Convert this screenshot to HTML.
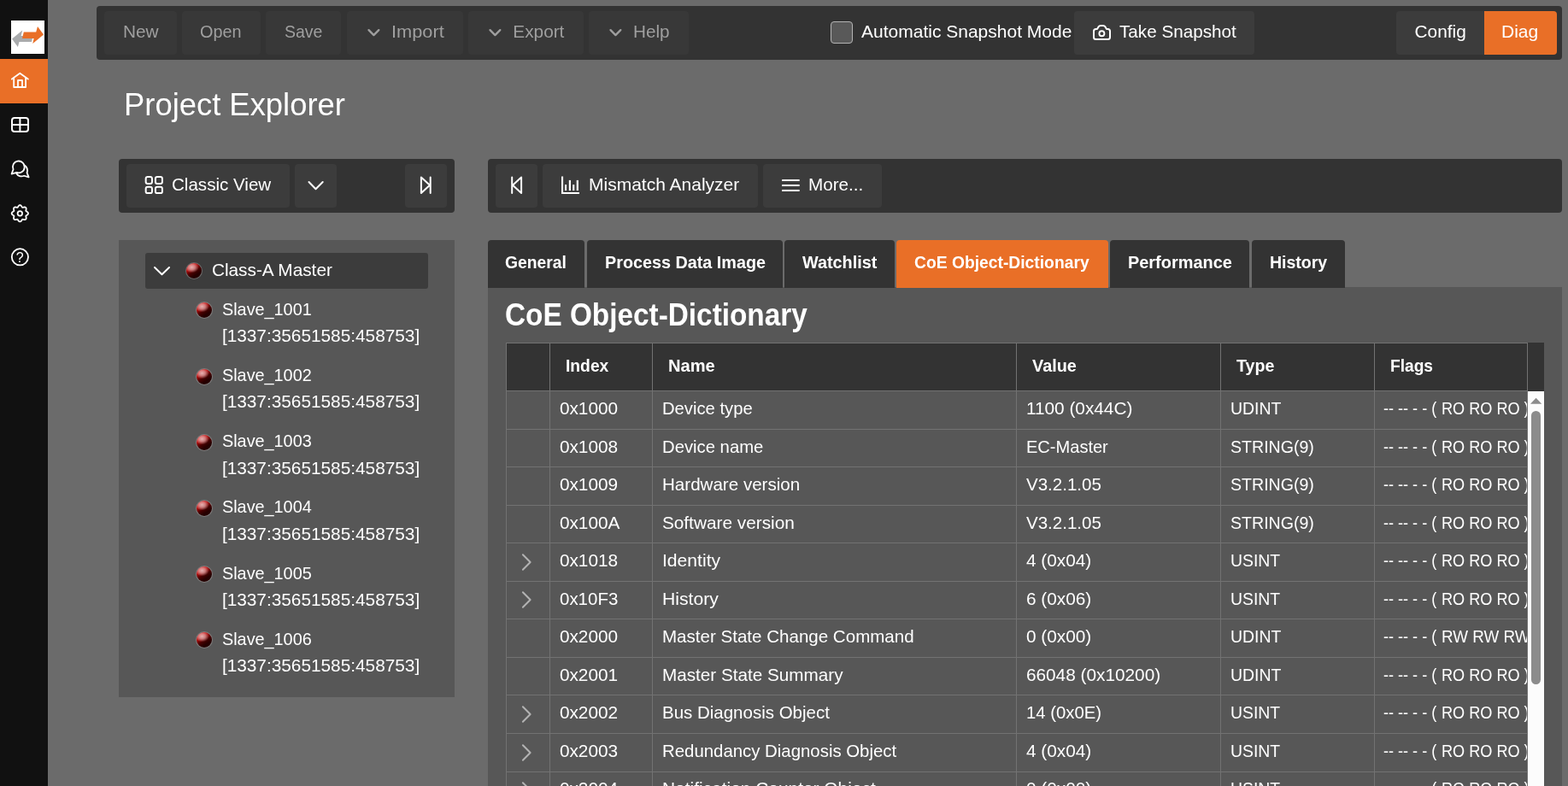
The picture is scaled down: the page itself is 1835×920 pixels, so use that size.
<!DOCTYPE html>
<html lang="en">
<head>
<meta charset="utf-8">
<title>Project Explorer</title>
<style>
*{box-sizing:border-box;margin:0;padding:0}
html,body{width:1835px;height:920px;overflow:hidden;background:#6b6b6b}
body{font-family:"Liberation Sans",sans-serif;font-size:20.8px;line-height:20.8px;color:#fff;position:relative}
body div,body span,body svg{position:absolute}
svg{overflow:visible}
#app{left:0;top:0;width:1835px;height:920px;will-change:transform}
.t{white-space:nowrap;transform-origin:0 50%;display:block}
.b{font-weight:bold}
.clip{overflow:hidden}
.ball{width:20px;height:20px;border-radius:50%;border:1px solid rgba(205,200,200,.32);background-clip:padding-box;
background:radial-gradient(ellipse 46% 36% at 36% 27%,rgba(232,195,195,.9) 0%,rgba(226,170,170,.72) 45%,rgba(210,90,90,0) 100%) padding-box,linear-gradient(148deg,#e81c1c 8%,#c00a0a 30%,#480000 53%,#240000 72%,#280000 100%) padding-box}
</style>
</head>
<body>
<div id="app">
<div style="left:0px;top:0px;width:56px;height:920px;background:#111;"></div>
<div style="left:13px;top:24px;width:39px;height:39px;background:#fff;"></div>
<svg style="left:13px;top:24px" width="39" height="39" viewBox="13 24 39 39" ><g transform="translate(13 24)"><polygon fill="#a9abad" points="1,21.5 13.2,11.5 11.6,18 25.6,18 24,24.9 9.5,24.9 7.9,31.1"/><polygon fill="#e96f27" points="14.8,13.5 29.2,13.5 31,7 38,16.6 25.3,27 26.6,21 13,21"/></g></svg>
<div style="left:0px;top:69px;width:56px;height:52px;background:#e96f27;"></div>
<svg style="left:8px;top:80px" width="32" height="28" viewBox="8 80 32 28" ><g fill="none" stroke="#fff" stroke-width="1.8" stroke-linecap="round" stroke-linejoin="round"><path d="M13.9 92.6 L23.3 85.7 L32.8 92.6"/><path d="M16.2 91.6 V102 H30.1 V91.6"/><path d="M21 102 V94 H26 V102"/></g></svg>
<svg style="left:8px;top:132px" width="32" height="28" viewBox="8 132 32 28" ><g fill="none" stroke="#fff" stroke-width="2" stroke-linecap="round" stroke-linejoin="round"><rect x="14" y="138" width="19" height="16" rx="3"/><path d="M23.4 138 V154 M14 146 H33"/></g></svg>
<svg style="left:8px;top:184px" width="32" height="30" viewBox="8 184 32 30" ><g fill="none" stroke="#fff" stroke-width="1.8" stroke-linecap="round" stroke-linejoin="round"><path d="M13.6 203.6 L15.55 198.3 A6.9 6.9 0 1 1 19.44 201.9 Z"/><path d="M28.4 193.4 A6.9 6.9 0 0 1 31.55 202.1 L33.6 207.4 L28.07 205.75 A6.9 6.9 0 0 1 19.17 202.95"/></g></svg>
<svg style="left:8px;top:236px" width="32" height="28" viewBox="8 236 32 28" ><g fill="none" stroke="#fff" stroke-width="1.8" stroke-linecap="round" stroke-linejoin="round"><path d="M23.35 240.15 L23.73 240.20 L24.09 240.34 L24.44 240.57 L24.77 240.87 L25.06 241.21 L25.32 241.59 L25.56 241.96 L25.78 242.31 L26.00 242.62 L26.24 242.82 L26.56 242.85 L26.92 242.79 L27.33 242.69 L27.76 242.60 L28.21 242.52 L28.67 242.48 L29.11 242.50 L29.51 242.59 L29.87 242.74 L30.17 242.98 L30.41 243.28 L30.56 243.64 L30.65 244.04 L30.67 244.48 L30.63 244.94 L30.55 245.39 L30.46 245.82 L30.36 246.23 L30.30 246.59 L30.33 246.91 L30.53 247.15 L30.84 247.37 L31.19 247.59 L31.56 247.83 L31.94 248.09 L32.28 248.38 L32.58 248.71 L32.81 249.06 L32.95 249.42 L33.00 249.80 L32.95 250.18 L32.81 250.54 L32.58 250.89 L32.28 251.22 L31.94 251.51 L31.56 251.77 L31.19 252.01 L30.84 252.23 L30.53 252.45 L30.33 252.69 L30.30 253.01 L30.36 253.37 L30.46 253.78 L30.55 254.21 L30.63 254.66 L30.67 255.12 L30.65 255.56 L30.56 255.96 L30.41 256.32 L30.17 256.62 L29.87 256.86 L29.51 257.01 L29.11 257.10 L28.67 257.12 L28.21 257.08 L27.76 257.00 L27.33 256.91 L26.92 256.81 L26.56 256.75 L26.24 256.78 L26.00 256.98 L25.78 257.29 L25.56 257.64 L25.32 258.01 L25.06 258.39 L24.77 258.73 L24.44 259.03 L24.09 259.26 L23.73 259.40 L23.35 259.45 L22.97 259.40 L22.61 259.26 L22.26 259.03 L21.93 258.73 L21.64 258.39 L21.38 258.01 L21.14 257.64 L20.92 257.29 L20.70 256.98 L20.46 256.78 L20.14 256.75 L19.78 256.81 L19.37 256.91 L18.94 257.00 L18.49 257.08 L18.03 257.12 L17.59 257.10 L17.19 257.01 L16.83 256.86 L16.53 256.62 L16.29 256.32 L16.14 255.96 L16.05 255.56 L16.03 255.12 L16.07 254.66 L16.15 254.21 L16.24 253.78 L16.34 253.37 L16.40 253.01 L16.37 252.69 L16.17 252.45 L15.86 252.23 L15.51 252.01 L15.14 251.77 L14.76 251.51 L14.42 251.22 L14.12 250.89 L13.89 250.54 L13.75 250.18 L13.70 249.80 L13.75 249.42 L13.89 249.06 L14.12 248.71 L14.42 248.38 L14.76 248.09 L15.14 247.83 L15.51 247.59 L15.86 247.37 L16.17 247.15 L16.37 246.91 L16.40 246.59 L16.34 246.23 L16.24 245.82 L16.15 245.39 L16.07 244.94 L16.03 244.48 L16.05 244.04 L16.14 243.64 L16.29 243.28 L16.53 242.98 L16.83 242.74 L17.19 242.59 L17.59 242.50 L18.03 242.48 L18.49 242.52 L18.94 242.60 L19.37 242.69 L19.78 242.79 L20.14 242.85 L20.46 242.82 L20.70 242.62 L20.92 242.31 L21.14 241.96 L21.38 241.59 L21.64 241.21 L21.93 240.87 L22.26 240.57 L22.61 240.34 L22.97 240.20 Z"/><circle cx="23.35" cy="249.8" r="2.75"/></g></svg>
<svg style="left:8px;top:287px" width="32" height="28" viewBox="8 287 32 28" ><g fill="none" stroke="#fff" stroke-width="1.8" stroke-linecap="round" stroke-linejoin="round"><circle cx="23.4" cy="300.8" r="9.6"/></g><text x="23.3" y="306.8" text-anchor="middle" font-family="Liberation Sans, sans-serif" font-size="16" fill="#fff">?</text></svg>
<div style="left:113px;top:7px;width:1715px;height:62.6px;background:#333;border-radius:4px"></div>
<div style="left:122px;top:13px;width:85px;height:50.9px;background:#383838;border-radius:4px;"></div>
<span class="t" style="left:144.0px;top:27px;color:#9f9f9f;">New</span>
<div style="left:213px;top:13px;width:92px;height:50.9px;background:#383838;border-radius:4px;"></div>
<span class="t" style="left:234.4px;top:27px;transform:scaleX(0.953);color:#9f9f9f;">Open</span>
<div style="left:311px;top:13px;width:88px;height:50.9px;background:#383838;border-radius:4px;"></div>
<span class="t" style="left:332.6px;top:27px;transform:scaleX(0.938);color:#9f9f9f;">Save</span>
<div style="left:406px;top:13px;width:136px;height:50.9px;background:#383838;border-radius:4px;"></div>
<svg style="left:426px;top:28px" width="24" height="20" viewBox="426 28 24 20" ><path fill="none" stroke="#9f9f9f" stroke-width="2.3" stroke-linecap="round" stroke-linejoin="round" d="M431.5 35.1 L437.4 41.1 L443.3 35.1"/></svg>
<span class="t" style="left:458.3px;top:27px;transform:scaleX(1.048);color:#9f9f9f;">Import</span>
<div style="left:548px;top:13px;width:135px;height:50.9px;background:#383838;border-radius:4px;"></div>
<svg style="left:568px;top:28px" width="24" height="20" viewBox="568 28 24 20" ><path fill="none" stroke="#9f9f9f" stroke-width="2.3" stroke-linecap="round" stroke-linejoin="round" d="M573.5 35.1 L579.4 41.1 L585.3 35.1"/></svg>
<span class="t" style="left:600.3px;top:27px;color:#9f9f9f;">Export</span>
<div style="left:689px;top:13px;width:117px;height:50.9px;background:#383838;border-radius:4px;"></div>
<svg style="left:709px;top:28px" width="24" height="20" viewBox="709 28 24 20" ><path fill="none" stroke="#9f9f9f" stroke-width="2.3" stroke-linecap="round" stroke-linejoin="round" d="M714.5 35.1 L720.4 41.1 L726.3 35.1"/></svg>
<span class="t" style="left:741.3px;top:27px;transform:scaleX(0.996);color:#9f9f9f;">Help</span>
<div style="left:972px;top:25px;width:26px;height:26px;background:#595959;border:1.3px solid #b4b4b4;border-radius:4px"></div>
<span class="t" style="left:1008.2px;top:27px;transform:scaleX(1.010);">Automatic Snapshot Mode</span>
<div style="left:1257px;top:13px;width:211px;height:50.9px;background:#3c3c3c;border-radius:4px;"></div>
<svg style="left:1276px;top:26px" width="28" height="24" viewBox="1276 26 28 24" ><g fill="none" stroke="#fff" stroke-width="2" stroke-linejoin="round"><path d="M1282.5 34 H1284 L1285.8 31 Q1286.5 29.9 1288 29.9 H1291 Q1292.5 29.9 1293.2 31 L1295 34 H1296.5 Q1299 34 1299 36.5 V43.4 Q1299 45.9 1296.5 45.9 H1282.5 Q1280 45.9 1280 43.4 V36.5 Q1280 34 1282.5 34 Z"/><circle cx="1289.4" cy="39.3" r="3.0" stroke-width="1.9"/></g></svg>
<span class="t" style="left:1310.2px;top:27px;transform:scaleX(0.994);">Take Snapshot</span>
<div style="left:1634px;top:13px;width:103px;height:50.9px;background:#3c3c3c;border-radius:4px;border-radius:4px 0 0 4px"></div>
<span class="t" style="left:1655.6px;top:27px;">Config</span>
<div style="left:1737px;top:13px;width:85px;height:50.9px;background:#e96f27;border-radius:4px;border-radius:0 4px 4px 0"></div>
<span class="t" style="left:1757.4px;top:27px;transform:scaleX(1.009);">Diag</span>
<span class="t raw" style="left:145.0px;top:105px;font-size:36.4px;line-height:36.4px;">Project Explorer</span>
<div style="left:139px;top:186px;width:393px;height:62.6px;background:#333;border-radius:4px"></div>
<div style="left:148px;top:192px;width:191.3px;height:50.7px;background:#3c3c3c;border-radius:4px"></div>
<svg style="left:168px;top:204px" width="25" height="25" viewBox="168 204 25 25" ><g fill="none" stroke="#fff" stroke-width="2"><rect x="170.65" y="206.9" width="7.3" height="8.0" rx="2.2"/><rect x="170.65" y="218.8" width="7.3" height="7.3" rx="2.2"/><rect x="181.9" y="206.9" width="8.0" height="8.0" rx="2.2"/><rect x="181.9" y="218.8" width="8.0" height="7.3" rx="2.2"/></g></svg>
<span class="t" style="left:201.0px;top:206px;transform:scaleX(0.989);">Classic View</span>
<div style="left:345px;top:192px;width:48.69999999999999px;height:50.7px;background:#3c3c3c;border-radius:4px"></div>
<svg style="left:358px;top:208px" width="24" height="18" viewBox="358 208 24 18" ><path fill="none" stroke="#fff" stroke-width="2" stroke-linecap="round" stroke-linejoin="round" d="M361.5 213 L369.5 221.2 L377.7 213"/></svg>
<div style="left:474px;top:192px;width:48.799999999999955px;height:50.7px;background:#3c3c3c;border-radius:4px"></div>
<svg style="left:489px;top:204px" width="20" height="26" viewBox="489 204 20 26" ><path fill="none" stroke="#fff" stroke-width="2" stroke-linecap="round" stroke-linejoin="round" d="M492.9 207.5 V226 L503 216.7 Z M503.7 207.5 V226"/></svg>
<div style="left:571px;top:186px;width:1257px;height:62.6px;background:#333;border-radius:4px"></div>
<div style="left:580px;top:192px;width:49.200000000000045px;height:50.7px;background:#3c3c3c;border-radius:4px"></div>
<svg style="left:595px;top:204px" width="20" height="26" viewBox="595 204 20 26" ><path fill="none" stroke="#fff" stroke-width="2" stroke-linecap="round" stroke-linejoin="round" d="M599.2 207.5 V226 M610.1 207.5 V226 L600 216.7 Z"/></svg>
<div style="left:635px;top:192px;width:252px;height:50.7px;background:#3c3c3c;border-radius:4px"></div>
<svg style="left:655px;top:204px" width="26" height="26" viewBox="655 204 26 26" ><g fill="#fff"><path d="M657 206.6 h2.1 v18.3 h18.9 v2.1 h-21 z"/><rect x="661" y="216.1" width="2.1" height="7"/><rect x="665.8" y="210.9" width="2.2" height="12.2"/><rect x="670.2" y="216.1" width="2.1" height="7"/><rect x="674.7" y="210.9" width="2.2" height="12.2"/></g></svg>
<span class="t" style="left:688.6px;top:206px;transform:scaleX(1.010);">Mismatch Analyzer</span>
<div style="left:893px;top:192px;width:139px;height:50.7px;background:#3c3c3c;border-radius:4px"></div>
<svg style="left:913px;top:208px" width="25" height="18" viewBox="913 208 25 18" ><g fill="#fff"><rect x="915" y="210" width="20.7" height="2" rx=".6"/><rect x="915" y="216" width="20.7" height="2" rx=".6"/><rect x="915" y="222" width="20.7" height="2" rx=".6"/></g></svg>
<span class="t" style="left:946.2px;top:206px;transform:scaleX(0.994);">More...</span>
<div style="left:139px;top:281px;width:393px;height:534.5px;background:#575757;"></div>
<div style="left:170px;top:296px;width:331px;height:41.8px;background:#3c3c3c;border-radius:3px"></div>
<svg style="left:178px;top:308px" width="24" height="18" viewBox="178 308 24 18" ><path fill="none" stroke="#fff" stroke-width="2" stroke-linecap="round" stroke-linejoin="round" d="M181 313 L189.5 321.3 L198 313"/></svg>
<div class="ball" style="left:217.2px;top:307.3px"></div>
<span class="t" style="left:247.9px;top:306px;">Class-A Master</span>
<div class="ball" style="left:229.3px;top:353.29999999999995px"></div>
<span class="t" style="left:259.6px;top:352px;transform:scaleX(0.953);">Slave_1001</span>
<span class="t" style="left:259.9px;top:383px;">[1337:35651585:458753]</span>
<div class="ball" style="left:229.3px;top:430.49999999999994px"></div>
<span class="t" style="left:259.6px;top:429px;transform:scaleX(0.953);">Slave_1002</span>
<span class="t" style="left:259.9px;top:460px;">[1337:35651585:458753]</span>
<div class="ball" style="left:229.3px;top:507.69999999999993px"></div>
<span class="t" style="left:259.6px;top:506px;transform:scaleX(0.953);">Slave_1003</span>
<span class="t" style="left:259.9px;top:538px;">[1337:35651585:458753]</span>
<div class="ball" style="left:229.3px;top:584.9px"></div>
<span class="t" style="left:259.6px;top:583px;transform:scaleX(0.953);">Slave_1004</span>
<span class="t" style="left:259.9px;top:615px;">[1337:35651585:458753]</span>
<div class="ball" style="left:229.3px;top:662.1px"></div>
<span class="t" style="left:259.6px;top:661px;transform:scaleX(0.953);">Slave_1005</span>
<span class="t" style="left:259.9px;top:692px;">[1337:35651585:458753]</span>
<div class="ball" style="left:229.3px;top:739.3px"></div>
<span class="t" style="left:259.6px;top:738px;transform:scaleX(0.953);">Slave_1006</span>
<span class="t" style="left:259.9px;top:769px;">[1337:35651585:458753]</span>
<div style="left:571px;top:336px;width:1257px;height:584px;background:#575757;"></div>
<div style="left:571px;top:281px;width:112.6px;height:56px;background:#333;border-radius:4px 4px 0 0"></div>
<span class="t b" style="left:591.3px;top:297px;transform:scaleX(0.929);">General</span>
<div style="left:687px;top:281px;width:229px;height:56px;background:#333;border-radius:4px 4px 0 0"></div>
<span class="t b" style="left:707.5px;top:297px;transform:scaleX(0.951);">Process Data Image</span>
<div style="left:918.3px;top:281px;width:128.7px;height:56px;background:#333;border-radius:4px 4px 0 0"></div>
<span class="t b" style="left:939.3px;top:297px;transform:scaleX(0.952);">Watchlist</span>
<div style="left:1049px;top:281px;width:248px;height:56px;background:#e96f27;border-radius:4px 4px 0 0"></div>
<span class="t b" style="left:1069.8px;top:297px;transform:scaleX(0.927);">CoE Object-Dictionary</span>
<div style="left:1299px;top:281px;width:162.7px;height:56px;background:#333;border-radius:4px 4px 0 0"></div>
<span class="t b" style="left:1319.8px;top:297px;transform:scaleX(0.958);">Performance</span>
<div style="left:1465px;top:281px;width:108.8px;height:56px;background:#333;border-radius:4px 4px 0 0"></div>
<span class="t b" style="left:1485.8px;top:297px;transform:scaleX(0.938);">History</span>
<span class="t b" style="left:591.4px;top:351px;font-size:36.4px;line-height:36.4px;transform:scaleX(0.916);">CoE Object-Dictionary</span>
<div style="left:592px;top:401px;width:1215px;height:57px;background:#333;"></div>
<span class="t b" style="left:662.4px;top:418px;transform:scaleX(0.926);">Index</span>
<span class="t b" style="left:782.4px;top:418px;transform:scaleX(0.967);">Name</span>
<span class="t b" style="left:1208.4px;top:418px;transform:scaleX(0.953);">Value</span>
<span class="t b" style="left:1447.4px;top:418px;transform:scaleX(0.944);">Type</span>
<span class="t b" style="left:1627.4px;top:418px;transform:scaleX(0.921);">Flags</span>
<div class="clip" style="left:592px;top:401px;width:1195.5px;height:519px">
<div style="left:-592px;top:-401px;width:0;height:0"><span class="t" style="left:654.9px;top:468px;">0x1000</span>
<span class="t" style="left:774.9px;top:468px;transform:scaleX(0.973);">Device type</span>
<span class="t" style="left:1200.9px;top:468px;">1100 (0x44C)</span>
<span class="t" style="left:1439.9px;top:468px;transform:scaleX(0.936);">UDINT</span>
<span class="t" style="left:1618.7px;top:468px;transform:scaleX(0.869);">-- -- - - (</span>
<span class="t" style="left:1687.3px;top:468px;transform:scaleX(0.871);">RO RO RO )</span>
<span class="t" style="left:654.9px;top:513px;">0x1008</span>
<span class="t" style="left:774.9px;top:513px;transform:scaleX(0.975);">Device name</span>
<span class="t" style="left:1200.9px;top:513px;transform:scaleX(0.964);">EC-Master</span>
<span class="t" style="left:1439.9px;top:513px;transform:scaleX(0.941);">STRING(9)</span>
<span class="t" style="left:1618.7px;top:513px;transform:scaleX(0.869);">-- -- - - (</span>
<span class="t" style="left:1687.3px;top:513px;transform:scaleX(0.871);">RO RO RO )</span>
<span class="t" style="left:654.9px;top:557px;">0x1009</span>
<span class="t" style="left:774.9px;top:557px;transform:scaleX(0.989);">Hardware version</span>
<span class="t" style="left:1200.9px;top:557px;transform:scaleX(0.986);">V3.2.1.05</span>
<span class="t" style="left:1439.9px;top:557px;transform:scaleX(0.941);">STRING(9)</span>
<span class="t" style="left:1618.7px;top:557px;transform:scaleX(0.869);">-- -- - - (</span>
<span class="t" style="left:1687.3px;top:557px;transform:scaleX(0.871);">RO RO RO )</span>
<span class="t" style="left:654.9px;top:602px;">0x100A</span>
<span class="t" style="left:774.9px;top:602px;">Software version</span>
<span class="t" style="left:1200.9px;top:602px;transform:scaleX(0.986);">V3.2.1.05</span>
<span class="t" style="left:1439.9px;top:602px;transform:scaleX(0.941);">STRING(9)</span>
<span class="t" style="left:1618.7px;top:602px;transform:scaleX(0.869);">-- -- - - (</span>
<span class="t" style="left:1687.3px;top:602px;transform:scaleX(0.871);">RO RO RO )</span>
<span class="t" style="left:654.9px;top:646px;">0x1018</span>
<span class="t" style="left:774.9px;top:646px;transform:scaleX(1.016);">Identity</span>
<span class="t" style="left:1200.9px;top:646px;">4 (0x04)</span>
<span class="t" style="left:1439.9px;top:646px;transform:scaleX(0.933);">USINT</span>
<span class="t" style="left:1618.7px;top:646px;transform:scaleX(0.869);">-- -- - - (</span>
<span class="t" style="left:1687.3px;top:646px;transform:scaleX(0.871);">RO RO RO )</span>
<svg style="left:607px;top:645.7px" width="20" height="24" viewBox="607 645.7 20 24" ><path fill="none" stroke="#b3b3b3" stroke-width="2" stroke-linecap="round" stroke-linejoin="round" d="M611.9 648.9 L620.6 657.7 L611.9 666.5"/></svg>
<span class="t" style="left:654.9px;top:691px;transform:scaleX(0.984);">0x10F3</span>
<span class="t" style="left:774.9px;top:691px;transform:scaleX(1.018);">History</span>
<span class="t" style="left:1200.9px;top:691px;">6 (0x06)</span>
<span class="t" style="left:1439.9px;top:691px;transform:scaleX(0.933);">USINT</span>
<span class="t" style="left:1618.7px;top:691px;transform:scaleX(0.869);">-- -- - - (</span>
<span class="t" style="left:1687.3px;top:691px;transform:scaleX(0.871);">RO RO RO )</span>
<svg style="left:607px;top:690.2px" width="20" height="24" viewBox="607 690.2 20 24" ><path fill="none" stroke="#b3b3b3" stroke-width="2" stroke-linecap="round" stroke-linejoin="round" d="M611.9 693.5 L620.6 702.2 L611.9 711.0"/></svg>
<span class="t" style="left:654.9px;top:735px;">0x2000</span>
<span class="t" style="left:774.9px;top:735px;transform:scaleX(0.988);">Master State Change Command</span>
<span class="t" style="left:1200.9px;top:735px;">0 (0x00)</span>
<span class="t" style="left:1439.9px;top:735px;transform:scaleX(0.936);">UDINT</span>
<span class="t" style="left:1618.7px;top:735px;transform:scaleX(0.869);">-- -- - - (</span>
<span class="t" style="left:1687.3px;top:735px;transform:scaleX(0.904);">RW RW RW )</span>
<span class="t" style="left:654.9px;top:780px;">0x2001</span>
<span class="t" style="left:774.9px;top:780px;transform:scaleX(0.995);">Master State Summary</span>
<span class="t" style="left:1200.9px;top:780px;">66048 (0x10200)</span>
<span class="t" style="left:1439.9px;top:780px;transform:scaleX(0.936);">UDINT</span>
<span class="t" style="left:1618.7px;top:780px;transform:scaleX(0.869);">-- -- - - (</span>
<span class="t" style="left:1687.3px;top:780px;transform:scaleX(0.871);">RO RO RO )</span>
<span class="t" style="left:654.9px;top:824px;">0x2002</span>
<span class="t" style="left:774.9px;top:824px;transform:scaleX(0.985);">Bus Diagnosis Object</span>
<span class="t" style="left:1200.9px;top:824px;transform:scaleX(0.977);">14 (0x0E)</span>
<span class="t" style="left:1439.9px;top:824px;transform:scaleX(0.933);">USINT</span>
<span class="t" style="left:1618.7px;top:824px;transform:scaleX(0.869);">-- -- - - (</span>
<span class="t" style="left:1687.3px;top:824px;transform:scaleX(0.871);">RO RO RO )</span>
<svg style="left:607px;top:823.9px" width="20" height="24" viewBox="607 823.9 20 24" ><path fill="none" stroke="#b3b3b3" stroke-width="2" stroke-linecap="round" stroke-linejoin="round" d="M611.9 827.1 L620.6 835.9 L611.9 844.7"/></svg>
<span class="t" style="left:654.9px;top:869px;">0x2003</span>
<span class="t" style="left:774.9px;top:869px;transform:scaleX(0.980);">Redundancy Diagnosis Object</span>
<span class="t" style="left:1200.9px;top:869px;">4 (0x04)</span>
<span class="t" style="left:1439.9px;top:869px;transform:scaleX(0.933);">USINT</span>
<span class="t" style="left:1618.7px;top:869px;transform:scaleX(0.869);">-- -- - - (</span>
<span class="t" style="left:1687.3px;top:869px;transform:scaleX(0.871);">RO RO RO )</span>
<svg style="left:607px;top:868.5px" width="20" height="24" viewBox="607 868.5 20 24" ><path fill="none" stroke="#b3b3b3" stroke-width="2" stroke-linecap="round" stroke-linejoin="round" d="M611.9 871.7 L620.6 880.5 L611.9 889.2"/></svg>
<span class="t" style="left:654.9px;top:913px;">0x2004</span>
<span class="t" style="left:774.9px;top:913px;transform:scaleX(1.005);">Notification Counter Object</span>
<span class="t" style="left:1200.9px;top:913px;">0 (0x00)</span>
<span class="t" style="left:1439.9px;top:913px;transform:scaleX(0.933);">USINT</span>
<span class="t" style="left:1618.7px;top:913px;transform:scaleX(0.869);">-- -- - - (</span>
<span class="t" style="left:1687.3px;top:913px;transform:scaleX(0.871);">RO RO RO )</span>
<svg style="left:607px;top:913.0px" width="20" height="24" viewBox="607 913.0 20 24" ><path fill="none" stroke="#b3b3b3" stroke-width="2" stroke-linecap="round" stroke-linejoin="round" d="M611.9 916.2 L620.6 925.0 L611.9 933.8"/></svg></div>
</div>
<div style="left:592px;top:401px;width:1px;height:519px;background:#727272;"></div>
<div style="left:643px;top:401px;width:1px;height:519px;background:#727272;"></div>
<div style="left:763px;top:401px;width:1px;height:519px;background:#727272;"></div>
<div style="left:1189px;top:401px;width:1px;height:519px;background:#727272;"></div>
<div style="left:1428px;top:401px;width:1px;height:519px;background:#727272;"></div>
<div style="left:1608px;top:401px;width:1px;height:519px;background:#727272;"></div>
<div style="left:1787px;top:401px;width:1px;height:519px;background:#727272;"></div>
<div style="left:592px;top:401px;width:1196px;height:1px;background:#727272;"></div>
<div style="left:592px;top:457px;width:1196px;height:1px;background:#727272;"></div>
<div style="left:592px;top:502px;width:1196px;height:1px;background:#727272;"></div>
<div style="left:592px;top:546px;width:1196px;height:1px;background:#727272;"></div>
<div style="left:592px;top:591px;width:1196px;height:1px;background:#727272;"></div>
<div style="left:592px;top:635px;width:1196px;height:1px;background:#727272;"></div>
<div style="left:592px;top:680px;width:1196px;height:1px;background:#727272;"></div>
<div style="left:592px;top:724px;width:1196px;height:1px;background:#727272;"></div>
<div style="left:592px;top:769px;width:1196px;height:1px;background:#727272;"></div>
<div style="left:592px;top:813px;width:1196px;height:1px;background:#727272;"></div>
<div style="left:592px;top:858px;width:1196px;height:1px;background:#727272;"></div>
<div style="left:592px;top:903px;width:1196px;height:1px;background:#727272;"></div>
<div style="left:592px;top:947px;width:1196px;height:1px;background:#727272;"></div>
<div style="left:1788px;top:458px;width:19px;height:462px;background:#fcfcfc;"></div>
<svg style="left:1789px;top:462px" width="17" height="14" viewBox="1789 462 17 14" ><path fill="#8c8c8c" d="M1791 472.8 L1797.6 465.8 L1804.2 472.8 Z"/></svg>
<div style="left:1792px;top:481.3px;width:11.3px;height:320px;background:#8c8c8c;border-radius:6px"></div>
</div>
</body>
</html>
